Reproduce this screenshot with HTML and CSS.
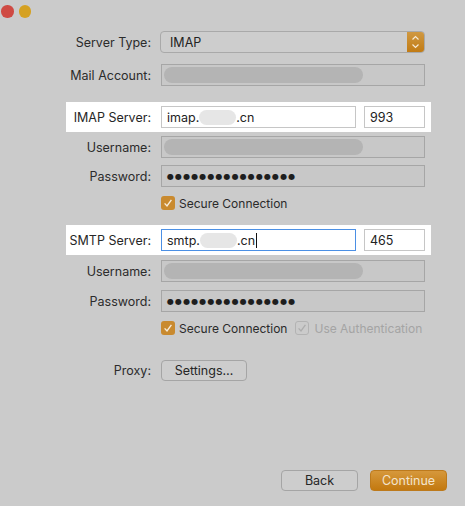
FILE: index.html
```html
<!DOCTYPE html>
<html>
<head>
<meta charset="utf-8">
<link rel="stylesheet" href="styles.css">
</head>
<body>
<div class="window">
  <div class="titlebar">
    <span class="light red"></span>
    <span class="light yellow"></span>
  </div>
  <div class="form">
    <div class="row r-type">
      <span class="label">Server Type:</span>
      <div class="popup">
        <span class="popup-text">IMAP</span>
        <span class="popup-arrows">
          <svg width="17" height="22" viewBox="0 0 17 22"><path d="M5.5 8.5 L8.5 5.5 L11.5 8.5 M5.5 13.5 L8.5 16.5 L11.5 13.5" fill="none" stroke="#f6ead6" stroke-width="1.2"/></svg>
        </span>
      </div>
    </div>
    <div class="row r-mail">
      <span class="label">Mail Account:</span>
      <div class="field dim"><span class="redact"></span></div>
    </div>
    <div class="row hl r-imap">
      <span class="label">IMAP Server:</span>
      <div class="field light-field server">imap.<span class="blur"></span>.cn</div>
      <div class="field light-field port">993</div>
    </div>
    <div class="row r-user1">
      <span class="label">Username:</span>
      <div class="field dim"><span class="redact"></span></div>
    </div>
    <div class="row r-pass1">
      <span class="label">Password:</span>
      <div class="field dim"><span class="dots">●●●●●●●●●●●●●●●●</span></div>
    </div>
    <div class="row checks r-sec1">
      <span class="check on"><svg width="14" height="14" viewBox="0 0 14 14"><path d="M3.6 7.4 L6 10 L10.4 3.8" fill="none" stroke="#f7ecda" stroke-width="1.4"/></svg></span>
      <span class="check-text">Secure Connection</span>
    </div>
    <div class="row hl r-smtp">
      <span class="label">SMTP Server:</span>
      <div class="field light-field server focus">smtp.<span class="blur"></span>.cn<span class="caret"></span></div>
      <div class="field light-field port">465</div>
    </div>
    <div class="row r-user2">
      <span class="label">Username:</span>
      <div class="field dim"><span class="redact"></span></div>
    </div>
    <div class="row r-pass2">
      <span class="label">Password:</span>
      <div class="field dim"><span class="dots">●●●●●●●●●●●●●●●●</span></div>
    </div>
    <div class="row checks r-sec2">
      <span class="check on"><svg width="14" height="14" viewBox="0 0 14 14"><path d="M3.6 7.4 L6 10 L10.4 3.8" fill="none" stroke="#f7ecda" stroke-width="1.4"/></svg></span>
      <span class="check-text">Secure Connection</span>
      <span class="check off"><svg width="14" height="14" viewBox="0 0 14 14"><path d="M3.6 7.4 L6 10 L10.4 3.8" fill="none" stroke="#adadad" stroke-width="1.3"/></svg></span>
      <span class="check-text disabled">Use Authentication</span>
    </div>
    <div class="row r-proxy">
      <span class="label">Proxy:</span>
      <button class="btn settings">Settings…</button>
    </div>
  </div>
  <div class="footer">
    <button class="btn back">Back</button>
    <button class="btn primary">Continue</button>
  </div>
</div>
</body>
</html>
```

FILE: styles.css
```css
html, body {
  margin: 0;
  padding: 0;
}
body {
  background: #cbcbcb;
  font-family: Inter, "Liberation Sans", sans-serif;
  font-size: 12px;
  color: #2a2a2a;
}
.window {
  display: flex;
  flex-direction: column;
  height: 506px;
}
.titlebar {
  height: 22px;
  display: flex;
  gap: 5px;
  padding: 5px 0 0 1px;
  box-sizing: border-box;
}
.light {
  width: 12.5px;
  height: 12.5px;
  border-radius: 50%;
  display: block;
}
.red { background: #cf4a43; }
.yellow { background: #d5a122; }

.form {
  display: flex;
  flex-direction: column;
  margin-top: 9px;
}
.row {
  display: flex;
  align-items: center;
}
.label {
  flex: none;
  width: 161px;
  padding-right: 10px;
  box-sizing: border-box;
  text-align: right;
  color: #2c2c2c;
  font-size: 12.5px;
}
.field {
  box-sizing: border-box;
  width: 264px;
  height: 22px;
  display: flex;
  align-items: center;
  padding-left: 5px;
  color: #222;
}
.field.dim {
  border: 1px solid #a6a6a6;
  background: #c8c8c8;
  padding-left: 2px;
}
.redact {
  display: block;
  width: 199px;
  height: 16px;
  border-radius: 8px;
  background: #b4b4b4;
}
.dots {
  font-family: "DejaVu Sans", sans-serif;
  font-size: 8px;
  letter-spacing: 1.1px;
  color: #1e1e1e;
  padding-left: 3px;
}

.hl {
  margin-left: 66px;
  width: 365px;
  padding: 4px 0;
  background: #ffffff;
}
.hl .label {
  width: 95px;
  color: #262626;
}
.light-field {
  background: #fff;
  border: 1px solid #c6c6c6;
  font-size: 12.5px;
}
.server { width: 195px; }
.port { width: 61px; margin-left: 8px; }
.focus {
  border: 1.5px solid #4b8fe4;
}
.blur {
  display: inline-block;
  width: 37px;
  height: 15px;
  border-radius: 8px;
  background: #e6e6e6;
}
.caret {
  display: inline-block;
  width: 1px;
  height: 15px;
  background: #111;
  margin-left: 1px;
}

.r-type { margin-top: 0; }
.popup {
  box-sizing: border-box;
  width: 265px;
  height: 22px;
  margin-left: -1px;
  border: 1px solid #a9a9a9;
  border-radius: 4px;
  display: flex;
  align-items: center;
  justify-content: space-between;
  background: #cdcdcd;
  overflow: hidden;
}
.popup-text {
  padding-left: 9px;
  color: #222;
  font-size: 12.5px;
}
.popup-arrows {
  width: 17px;
  height: 22px;
  margin-top: -1px;
  margin-bottom: -1px;
  display: flex;
  background: linear-gradient(#d09a44, #c17a12);
}

.r-mail { margin-top: 11px; }
.r-imap { margin-top: 16px; }
.r-user1 { margin-top: 4px; }
.r-pass1 { margin-top: 7px; }
.r-sec1 { margin-top: 9px; }
.r-smtp { margin-top: 15px; }
.r-user2 { margin-top: 5px; }
.r-pass2 { margin-top: 8px; }
.r-sec2 { margin-top: 9px; }
.r-proxy { margin-top: 25px; }

.checks {
  padding-left: 161px;
  height: 14px;
}
.check {
  box-sizing: border-box;
  width: 14px;
  height: 14px;
  border-radius: 3px;
  display: flex;
  flex: none;
}
.check.on {
  background: #c98a2f;
}
.check.off {
  border: 1px solid #b3b3b3;
  margin-left: 8px;
}
.check.off svg { margin: -1px; }
.check-text {
  margin-left: 4px;
  color: #2a2a2a;
}
.check-text.disabled {
  margin-left: 5px;
  color: #a4a4a4;
}

.btn {
  font-family: Inter, "Liberation Sans", sans-serif;
  font-size: 12.5px;
  height: 21px;
  box-sizing: border-box;
  border: 1px solid #a5a5a5;
  border-radius: 4px;
  background: #cdcdcd;
  color: #262626;
  padding: 0;
}
.settings { width: 86px; }
.footer {
  margin-top: auto;
  display: flex;
  justify-content: flex-end;
  gap: 12px;
  padding: 0 18px 15px 0;
}
.back { width: 77px; }
.primary {
  width: 77px;
  border: 1px solid #bd7a1c;
  background: linear-gradient(#d6983c, #c3790f);
  color: #f3e4cd;
}
```
